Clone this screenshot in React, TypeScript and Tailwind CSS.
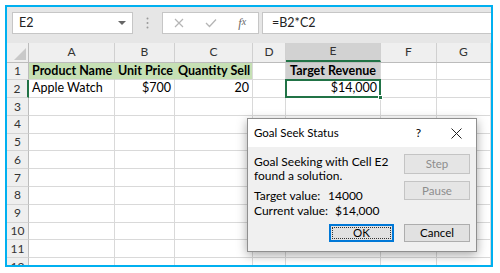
import React from "react";

const COLS = [
  { key: "A", w: 86 },
  { key: "B", w: 60 },
  { key: "C", w: 78 },
  { key: "D", w: 33 },
  { key: "E", w: 95 },
  { key: "F", w: 56 },
  { key: "G", w: 54 },
];

const cellFont = { fontFamily: "Lato, 'Liberation Sans', sans-serif" };

function Row({ n }: { n: number }) {
  const isRow1 = n === 1;
  const isRow2 = n === 2;
  return (
    <div className="flex h-[17.8px] shrink-0">
      <div
        className={
          "w-[22px] shrink-0 flex items-center justify-center text-[12px] text-[#333] bg-[#efefef] border-b border-[#d4d4d4] " +
          (isRow2 ? "border-r-2 border-r-[#217346]" : "border-r border-r-[#bcbcbc]")
        }
      >
        {n}
      </div>
      {COLS.map((c) => {
        let content: React.ReactNode = null;
        let cls = "border-r border-b border-[#d9d9d9] flex items-center px-[3px] text-[12.5px] text-black whitespace-nowrap overflow-visible";
        if (isRow1 && (c.key === "A" || c.key === "B" || c.key === "C")) {
          cls += " bg-[#c6e0b4] font-bold border-r-[#c6e0b4]";
          content = c.key === "A" ? "Product Name" : c.key === "B" ? "Unit Price" : "Quantity Sell";
          if (c.key === "C") cls += " border-r-[#d9d9d9]";
        }
        if (isRow1 && c.key === "E") {
          cls += " bg-[#d0d0d0] font-bold justify-center";
          content = "Target Revenue";
        }
        if (isRow2) {
          if (c.key === "A") content = "Apple Watch";
          if (c.key === "B") { content = "$700"; cls += " justify-end"; }
          if (c.key === "C") { content = "20"; cls += " justify-end"; }
          if (c.key === "E") { content = "$14,000"; cls += " justify-end relative"; }
        }
        return (
          <div key={c.key} className={cls + " shrink-0"} style={{ width: c.w }}>
            {content}
            {isRow2 && c.key === "E" && (
              <>
                <div className="absolute left-[-1px] top-[-1px] right-[-1px] bottom-[-1px] border-2 border-[#217346] pointer-events-none" />
                <div className="absolute right-[-3px] bottom-[-3px] w-[5px] h-[5px] bg-[#217346] border border-white" />
              </>
            )}
          </div>
        );
      })}
    </div>
  );
}

export default function App() {
  return (
    <div className="w-[500px] h-[273px] bg-white relative overflow-hidden" style={cellFont}>
      <div className="ml-[5px] mt-[5px] w-[488px] h-[262px] border-2 border-[#00b0f0] overflow-hidden flex flex-col bg-white">
        {/* Formula bar */}
        <div className="h-[36px] shrink-0 bg-[#e6e6e6] flex items-start pt-[5px] pl-[5px]">
          <div className="w-[121px] h-[22px] bg-white border border-[#c6c6c6] flex items-center justify-between pl-[6px] pr-[6px] text-[12.5px] text-[#222]">
            <span>E2</span>
            <svg width="8" height="5" viewBox="0 0 8 5"><path d="M0 0 L8 0 L4 4 Z" fill="#666" /></svg>
          </div>
          <div className="w-[29px] h-[22px] flex items-center justify-center">
            <svg width="3" height="12" viewBox="0 0 3 12">
              <circle cx="1.5" cy="1.5" r="1" fill="#9a9a9a" />
              <circle cx="1.5" cy="6" r="1" fill="#9a9a9a" />
              <circle cx="1.5" cy="10.5" r="1" fill="#9a9a9a" />
            </svg>
          </div>
          <div className="w-[97px] h-[22px] bg-white border border-[#c6c6c6] flex items-center">
            <div className="w-[32px] flex justify-center">
              <svg width="10" height="10" viewBox="0 0 10 10"><path d="M1 1 L9 9 M9 1 L1 9" stroke="#b5b5b5" strokeWidth="1.2" /></svg>
            </div>
            <div className="w-[32px] flex justify-center">
              <svg width="12" height="10" viewBox="0 0 12 10"><path d="M1 5 L4.5 8.5 L11 1.5" stroke="#b5b5b5" strokeWidth="1.3" fill="none" /></svg>
            </div>
            <div className="w-[32px] flex justify-center text-[12px] italic text-[#666]" style={{ fontFamily: "'Liberation Serif', serif" }}>
              f<span className="text-[10px]">x</span>
            </div>
          </div>
          <div className="ml-[3px] flex-1 h-[22px] bg-white border border-[#c6c6c6] border-r-0 flex items-center pl-[9px] text-[12.5px] text-[#222]">
            =B2*C2
          </div>
        </div>
        {/* Column headers */}
        <div className="flex h-[19.5px] shrink-0 bg-[#efefef] border-b border-[#bcbcbc]">
          <div className="w-[22px] shrink-0 border-r border-[#bcbcbc] relative">
            <svg className="absolute right-[2px] bottom-[2px]" width="12" height="12" viewBox="0 0 12 12"><path d="M12 0 L12 12 L0 12 Z" fill="#c9c9c9" /></svg>
          </div>
          {COLS.map((c) => (
            <div
              key={c.key}
              className={
                "shrink-0 flex items-center justify-center text-[12px] text-[#333] border-r border-[#d0d0d0] " +
                (c.key === "E" ? "bg-[#d2d2d2] border-b-2 border-b-[#217346]" : "")
              }
              style={{ width: c.w }}
            >
              {c.key}
            </div>
          ))}
        </div>
        {Array.from({ length: 12 }, (_, i) => (
          <Row key={i} n={i + 1} />
        ))}
      </div>

      {/* Goal Seek dialog */}
      <div
        className="absolute left-[247px] top-[118px] w-[230px] h-[134px] bg-[#f0f0f0] border border-[#8f8f8f] flex flex-col shadow-[0_3px_10px_rgba(0,0,0,0.35)]"
        style={{ fontFamily: "Lato, 'Liberation Sans', sans-serif" }}
      >
        <div className="h-[28px] shrink-0 bg-white flex items-center pl-[6px] pr-[14px] text-[11.5px] text-black">
          <span className="flex-1">Goal Seek Status</span>
          <span className="mr-[30px] text-[12px]">?</span>
          <svg width="11" height="11" viewBox="0 0 11 11"><path d="M0.5 0.5 L10.5 10.5 M10.5 0.5 L0.5 10.5" stroke="#222" strokeWidth="1" /></svg>
        </div>
        <div className="flex-1 flex flex-col px-[6px]">
          <div className="flex">
            <div className="flex-1 pt-[8px] text-[12px] text-black">
              <div className="leading-[14px]">Goal Seeking with Cell E2</div>
              <div className="leading-[14px]">found a solution.</div>
              <div className="mt-[5px] leading-[15px] flex">
                <span className="w-[74px]">Target value:</span>
                <span>14000</span>
              </div>
              <div className="leading-[15px] flex">
                <span className="w-[81px]">Current value:</span>
                <span>$14,000</span>
              </div>
            </div>
            <div className="w-[66px] pt-[7px] flex flex-col gap-[7px]">
              <div className="h-[20px] bg-[#e5e5e5] border border-[#c4c4c4] flex items-center justify-center text-[11.5px] text-[#8d8d8d]">Step</div>
              <div className="h-[19px] bg-[#e5e5e5] border border-[#c4c4c4] flex items-center justify-center text-[11.5px] text-[#8d8d8d]">Pause</div>
            </div>
          </div>
          <div className="mt-auto mb-[9px] flex justify-end gap-[10px]">
            <div className="w-[65px] h-[18px] bg-[#e1e1e1] border-2 border-[#0078d7] flex items-center justify-center text-[11.5px] text-black p-[1px]">
              <div className="w-full h-full border border-dotted border-[#333] flex items-center justify-center">OK</div>
            </div>
            <div className="w-[66px] h-[18px] bg-[#e1e1e1] border border-[#adadad] flex items-center justify-center text-[11.5px] text-black">Cancel</div>
          </div>
        </div>
      </div>
    </div>
  );
}
